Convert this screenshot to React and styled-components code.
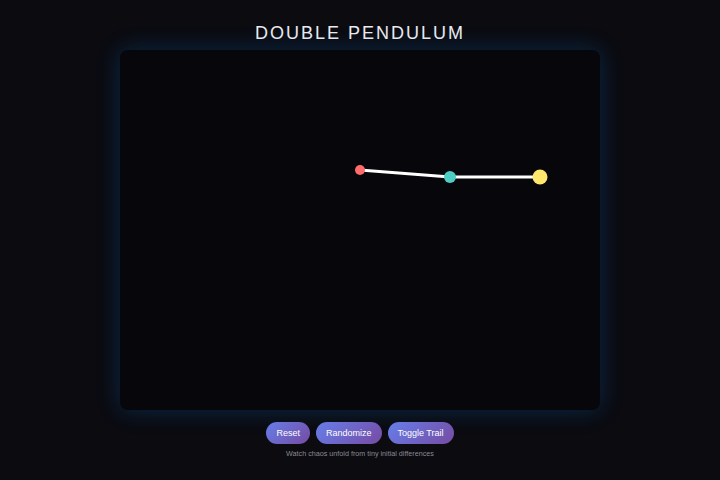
import React from 'react'
import styled, { createGlobalStyle } from 'styled-components'

const GlobalStyle = createGlobalStyle`
  html, body {
    margin: 0;
    padding: 0;
    background: #0b0b10;
    font-family: "Liberation Sans", Arial, sans-serif;
  }
`

const Page = styled.div`
  display: flex;
  flex-direction: column;
  align-items: center;
  min-height: 480px;
  padding-top: 21px;
  box-sizing: border-box;
`

const Title = styled.h1`
  margin: 0 0 5px;
  font-size: 18px;
  line-height: 24px;
  font-weight: 400;
  letter-spacing: 2px;
  color: #ececf0;
`

const Stage = styled.div`
  width: 480px;
  height: 360px;
  background: #07060b;
  border-radius: 8px;
  box-shadow: 0 0 24px rgba(0, 140, 255, 0.24);
  overflow: hidden;
`

const Controls = styled.div`
  display: flex;
  gap: 6px;
  margin-top: 12px;
`

const Button = styled.button`
  height: 22px;
  padding: 0 10px;
  border: none;
  border-radius: 11px;
  background: linear-gradient(135deg, #667eea 0%, #764ba2 100%);
  color: #fff;
  font-family: "Liberation Sans", Arial, sans-serif;
  font-size: 9px;
  cursor: pointer;
`

const Caption = styled.p`
  margin: 5px 0 0;
  font-size: 7.2px;
  color: #8a8a92;
`

const Pendulum = () => {
  const pivot = { x: 240, y: 120 }
  const m1 = { x: 330, y: 127 }
  const m2 = { x: 420, y: 127 }
  return (
    <svg width="480" height="360" viewBox="0 0 480 360">
      <line x1={pivot.x} y1={pivot.y} x2={m1.x} y2={m1.y} stroke="#fff" strokeWidth="3" strokeLinecap="round" />
      <line x1={m1.x} y1={m1.y} x2={m2.x} y2={m2.y} stroke="#fff" strokeWidth="3" strokeLinecap="round" />
      <circle cx={pivot.x} cy={pivot.y} r="5" fill="#ff6b6b" />
      <circle cx={m1.x} cy={m1.y} r="6" fill="#4ecdc4" />
      <circle cx={m2.x} cy={m2.y} r="7.5" fill="#ffe66d" />
    </svg>
  )
}

export default function App() {
  return (
    <>
      <GlobalStyle />
      <Page>
        <Title>DOUBLE PENDULUM</Title>
        <Stage>
          <Pendulum />
        </Stage>
        <Controls>
          <Button>Reset</Button>
          <Button>Randomize</Button>
          <Button>Toggle Trail</Button>
        </Controls>
        <Caption>Watch chaos unfold from tiny initial differences</Caption>
      </Page>
    </>
  )
}
